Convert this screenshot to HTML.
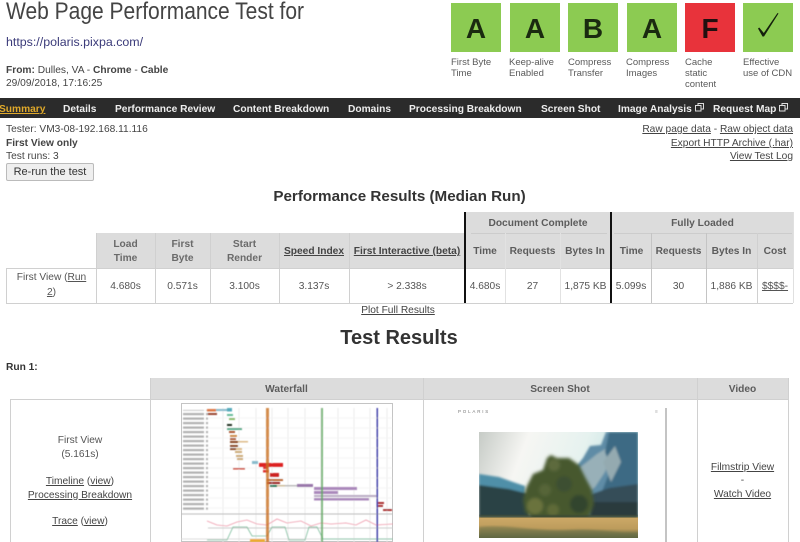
<!DOCTYPE html>
<html><head><meta charset="utf-8"><title>Web Page Performance Test</title>
<style>
html,body{margin:0;padding:0;background:#fff;width:800px;height:542px;overflow:hidden}
#p{position:relative;width:800px;height:542px;overflow:hidden;font-family:"Liberation Sans",sans-serif;font-size:10.2px;color:#444;filter:blur(.35px)}
#p div{position:absolute;white-space:nowrap}
.t{line-height:13px}
.c{text-align:center}
.r{text-align:right}
.b{font-weight:bold}
u{text-decoration:underline}
.g{background:#8ccb52;width:50px;height:49px;top:3px;text-align:center;font:bold 28px/51px "Liberation Sans",sans-serif;color:#1a2a10}
.l{top:57px;line-height:11px;font-size:9.5px;color:#5a5a5a;white-space:pre!important}
.n{top:103px;line-height:13px;font-weight:bold;color:#eee;font-size:10.2px}
.h{background:#dcdcdc}
.vl{width:1px;background:#d0d0d0}
.hl{height:1px;background:#d0d0d0}
.bk{width:2px;background:#111;top:212px;height:91px}
.th{font-weight:bold;color:#5c5c5c;line-height:13.5px;text-align:center}
.td{line-height:13px;text-align:center;top:280px;color:#555}
</style></head><body><div id="p">

<div style="left:6px;top:-3px;font-size:24px;line-height:30px;color:#444;transform:scaleX(.875);transform-origin:0 0">Web Page Performance Test for</div>
<div style="left:6px;top:35px;font-size:12.4px;line-height:15px;color:#3b3b7a">https://polaris.pixpa.com/</div>
<div class="t" style="left:6px;top:64px"><b>From:</b> Dulles, VA - <b>Chrome</b> - <b>Cable</b></div>
<div class="t" style="left:6px;top:77px">29/09/2018, 17:16:25</div>

<div class="g" style="left:451px">A</div>
<div class="g" style="left:510px">A</div>
<div class="g" style="left:568px">B</div>
<div class="g" style="left:627px">A</div>
<div class="g" style="left:685px;background:#e8333b;color:#201010">F</div>
<div class="g" style="left:743px"></div>
<svg style="position:absolute;left:743px;top:3px" width="50" height="49"><path d="M15 25.500 L16.200 24.500 L20.800 30 L34.500 10 L35.500 10.500 L21 33.500 L19.500 33.500Z" fill="#14200c"/></svg>
<div class="l" style="left:451px">First Byte
Time</div>
<div class="l" style="left:509px">Keep-alive
Enabled</div>
<div class="l" style="left:568px">Compress
Transfer</div>
<div class="l" style="left:626px">Compress
Images</div>
<div class="l" style="left:685px">Cache
static
content</div>
<div class="l" style="left:743px">Effective
use of CDN</div>

<div style="left:0;top:98px;width:800px;height:20px;background:#2b2b2b"></div>
<div class="n" style="left:-1px;color:#e0a92a"><u>Summary</u></div>
<div class="n" style="left:63px">Details</div>
<div class="n" style="left:115px">Performance Review</div>
<div class="n" style="left:233px">Content Breakdown</div>
<div class="n" style="left:348px">Domains</div>
<div class="n" style="left:409px">Processing Breakdown</div>
<div class="n" style="left:541px">Screen Shot</div>
<div class="n" style="left:618px">Image Analysis</div>
<div class="n" style="left:713px">Request Map</div>
<svg style="position:absolute;left:695px;top:103px" width="10" height="10"><path d="M.5 2.500h5.500v5.500h-5.500zM3 2.500v-2h5.500v5.500h-2.500" fill="none" stroke="#ddd"/></svg>
<svg style="position:absolute;left:779px;top:103px" width="10" height="10"><path d="M.5 2.500h5.500v5.500h-5.500zM3 2.500v-2h5.500v5.500h-2.500" fill="none" stroke="#ddd"/></svg>

<div class="t" style="left:6px;top:123px">Tester: VM3-08-192.168.11.116</div>
<div class="t b" style="left:6px;top:137px">First View only</div>
<div class="t" style="left:6px;top:150px">Test runs: 3</div>
<div class="c" style="left:6px;top:163px;width:86px;height:16px;border:1px solid #bbb;background:#efefef;border-radius:2px;font-size:11px;line-height:17px;color:#333">Re-run the test</div>

<div class="t r" style="right:7px;top:123px"><u>Raw page data</u> - <u>Raw object data</u></div>
<div class="t r" style="right:7px;top:137px"><u>Export HTTP Archive (.har)</u></div>
<div class="t r" style="right:7px;top:150px"><u>View Test Log</u></div>

<div class="c b" style="left:0;width:799px;top:188px;font-size:15.2px;line-height:18px;color:#333">Performance Results (Median Run)</div>

<div class="h" style="left:96px;top:233px;width:369px;height:35px"></div>
<div class="h" style="left:465px;top:212px;width:328px;height:56px"></div>
<div class="hl" style="left:7px;top:268px;width:786px"></div>
<div class="hl" style="left:7px;top:303px;width:786px"></div>
<div class="hl" style="left:471px;top:233px;width:136px;background:#ccc"></div>
<div class="hl" style="left:614px;top:233px;width:178px;background:#ccc"></div>
<div class="vl" style="left:6px;top:268px;height:36px"></div>
<div class="vl" style="left:96px;top:233px;height:70px"></div>
<div class="vl" style="left:155px;top:233px;height:70px"></div>
<div class="vl" style="left:210px;top:233px;height:70px"></div>
<div class="vl" style="left:279px;top:233px;height:70px"></div>
<div class="vl" style="left:349px;top:233px;height:70px"></div>
<div class="vl" style="left:505px;top:233px;height:70px;background:#e2e2e2"></div>
<div class="vl" style="left:560px;top:233px;height:70px;background:#e2e2e2"></div>
<div class="vl" style="left:651px;top:233px;height:70px;background:#c4c4c4"></div>
<div class="vl" style="left:706px;top:233px;height:70px;background:#c4c4c4"></div>
<div class="vl" style="left:757px;top:233px;height:70px"></div>
<div class="vl" style="left:793px;top:212px;height:91px;background:#e0e0e0"></div>
<div class="bk" style="left:464px"></div>
<div class="bk" style="left:610px"></div>

<div class="th" style="left:466px;width:144px;top:217px;">Document Complete</div>
<div class="th" style="left:612px;width:181px;top:217px;">Fully Loaded</div>
<div class="th" style="left:96px;width:59px;top:238px;color:#6a6a6a">Load<br>Time</div>
<div class="th" style="left:155px;width:55px;top:238px;color:#6a6a6a">First<br>Byte</div>
<div class="th" style="left:210px;width:69px;top:238px;color:#6a6a6a">Start<br>Render</div>
<div class="th" style="left:279px;width:70px;top:245px;color:#444"><u>Speed Index</u></div>
<div class="th" style="left:349px;width:116px;top:245px;color:#444"><u>First Interactive (beta)</u></div>
<div class="th" style="left:465px;width:40px;top:245px">Time</div>
<div class="th" style="left:505px;width:55px;top:245px">Requests</div>
<div class="th" style="left:560px;width:50px;top:245px">Bytes In</div>
<div class="th" style="left:612px;width:39px;top:245px">Time</div>
<div class="th" style="left:651px;width:55px;top:245px">Requests</div>
<div class="th" style="left:706px;width:51px;top:245px">Bytes In</div>
<div class="th" style="left:757px;width:36px;top:245px">Cost</div>

<div class="td" style="left:7px;width:89px;top:271px;line-height:14.500px">First View (<u>Run</u><br><u>2</u>)</div>
<div class="td" style="left:96px;width:59px">4.680s</div>
<div class="td" style="left:155px;width:55px">0.571s</div>
<div class="td" style="left:210px;width:69px">3.100s</div>
<div class="td" style="left:279px;width:70px">3.137s</div>
<div class="td" style="left:349px;width:116px">&gt; 2.338s</div>
<div class="td" style="left:465px;width:40px">4.680s</div>
<div class="td" style="left:505px;width:55px">27</div>
<div class="td" style="left:560px;width:51px">1,875 KB</div>
<div class="td" style="left:611px;width:40px">5.099s</div>
<div class="td" style="left:651px;width:55px">30</div>
<div class="td" style="left:706px;width:51px">1,886 KB</div>
<div class="td" style="left:757px;width:36px"><u>$$$$-</u></div>

<div class="t c" style="left:0;width:796px;top:304px"><u>Plot Full Results</u></div>
<div class="c b" style="left:0;width:798px;top:326px;font-size:20px;line-height:24px;color:#333">Test Results</div>
<div class="t b" style="left:6px;top:361px;color:#333">Run 1:</div>

<div class="h" style="left:150px;top:378px;width:638px;height:22px"></div>
<div class="hl" style="left:10px;top:399px;width:779px"></div>
<div class="vl" style="left:10px;top:399px;height:143px"></div>
<div class="vl" style="left:150px;top:378px;height:164px"></div>
<div class="vl" style="left:423px;top:378px;height:164px"></div>
<div class="vl" style="left:697px;top:378px;height:164px"></div>
<div class="vl" style="left:788px;top:378px;height:164px"></div>
<div class="th" style="left:150px;width:273px;top:383px">Waterfall</div>
<div class="th" style="left:423px;width:274px;top:383px">Screen Shot</div>
<div class="th" style="left:697px;width:91px;top:383px">Video</div>

<div class="t c" style="left:10px;width:140px;top:434px;line-height:13.500px;color:#555">First View<br>(5.161s)</div>
<div class="t c" style="left:10px;width:140px;top:475px;line-height:13.500px"><u>Timeline</u> (<u>view</u>)<br><u>Processing Breakdown</u></div>
<div class="t c" style="left:10px;width:140px;top:515px"><u>Trace</u> (<u>view</u>)</div>
<div class="t c" style="left:697px;width:91px;top:461px"><u>Filmstrip View</u></div>
<div class="t c" style="left:697px;width:91px;top:474px">-</div>
<div class="t c" style="left:697px;width:91px;top:488px"><u>Watch Video</u></div>

<!-- waterfall -->
<svg style="position:absolute;left:181px;top:403px" width="212" height="139" viewBox="0 0 212 139">
<defs><filter id="s"><feGaussianBlur stdDeviation=".6"/></filter>
<pattern id="tx" width="25" height="4.500" patternUnits="userSpaceOnUse"><rect y="1" width="23" height="2.200" fill="#888" opacity=".65"/></pattern></defs>
<rect x=".5" y=".5" width="211" height="138" fill="#fff" stroke="#c4c4c4"/>
<g filter="url(#s)">
<rect x="2" y="7" width="25" height="102" fill="url(#tx)"/>
<g stroke="#ebebeb"><path d="M42 5V139M58 5V139M75 5V139M91 5V139M107 5V139M124 5V139M140 5V139M157 5V139M173 5V139M189 5V139M206 5V139"/></g>
<g stroke="#f4f4f4"><path d="M27 15H211M27 25H211M27 35H211M27 45H211M27 55H211M27 65H211M27 75H211M27 85H211M27 95H211M27 105H211"/></g>
<rect x="26" y="6" width="9" height="2.500" fill="#d74"/><rect x="35" y="6" width="11" height="2" fill="#8bc"/><rect x="46" y="5" width="5" height="3.500" fill="#5ab"/>
<rect x="27" y="10" width="9" height="2" fill="#943"/>
<rect x="46" y="11" width="6" height="2" fill="#6b9"/><rect x="48" y="15" width="6" height="2" fill="#8b6"/>
<rect x="46" y="21" width="5" height="2" fill="#232"/><rect x="46" y="25" width="15" height="2" fill="#5a8"/>
<rect x="48" y="28" width="6" height="2" fill="#a53"/><rect x="49" y="32" width="7" height="2" fill="#c84"/><rect x="49" y="35" width="6" height="2" fill="#a53"/>
<rect x="49" y="38" width="8" height="2" fill="#842"/><rect x="57" y="38" width="10" height="1.500" fill="#db8"/>
<rect x="49" y="42" width="8" height="2" fill="#842"/><rect x="49" y="45" width="6" height="2" fill="#842"/><rect x="55" y="45" width="6" height="2" fill="#db8"/>
<rect x="54" y="48" width="7" height="2" fill="#ca7"/><rect x="55" y="52" width="7" height="2" fill="#ca7"/><rect x="56" y="55" width="6" height="2" fill="#ca7"/>
<rect x="71" y="58" width="6" height="3" fill="#8bc"/>
<rect x="78" y="60" width="24" height="4" fill="#d22"/><rect x="52" y="65" width="12" height="1.500" fill="#c43"/>
<rect x="82" y="63" width="5" height="3" fill="#d33"/><rect x="82" y="67" width="6" height="2.500" fill="#d33"/>
<rect x="89" y="70" width="9" height="4" fill="#c22"/><rect x="86" y="76" width="16" height="2" fill="#b63"/><rect x="86" y="79" width="13" height="2" fill="#922"/>
<rect x="89" y="82" width="7" height="2" fill="#275"/><rect x="96" y="82" width="8" height="1.500" fill="#cb9"/><rect x="104" y="82" width="12" height="1.500" fill="#bbb"/><rect x="116" y="81" width="16" height="3" fill="#97a"/>
<rect x="133" y="84" width="43" height="3" fill="#a8b"/>
<rect x="133" y="88" width="24" height="3" fill="#a8b"/>
<rect x="133" y="92" width="63" height="2" fill="#b9acc4"/>
<rect x="133" y="95" width="55" height="2.500" fill="#a8b"/>
<rect x="197" y="99" width="6" height="2" fill="#a33"/><rect x="197" y="102" width="5" height="2" fill="#a33"/><rect x="202" y="106" width="9" height="2" fill="#a33"/>
<path d="M0 111H212" stroke="#bbb"/><path d="M27 125H212" stroke="#ccc"/><path d="M0 136H212" stroke="#ddd"/>
<path d="M26 118L36 122 46 123 56 119 66 117 76 121 86 122 96 116 106 120 120 118 130 123 140 120 150 121 165 120 175 122 185 117 195 122 212 121" fill="none" stroke="#e9a" stroke-width=".8"/>
<path d="M26 137H46L52 124H66L71 133H86L91 124H104L108 137H124L128 124H136L142 136H212" fill="none" stroke="#7b9" stroke-width=".8"/>
<rect x="69" y="136" width="15" height="3" fill="#ea3"/>
<rect x="85" y="5" width="3" height="134" fill="#c96f20" opacity=".8"/>
<rect x="140" y="5" width="2" height="134" fill="#5ea85e" opacity=".8"/>
<rect x="195.500" y="5" width="1.500" height="134" fill="#4444aa"/>
</g>
</svg>

<!-- screenshot -->
<div class="vl" style="left:665px;top:408px;height:134px;width:1.500px;background:#c4c4c4"></div>
<div style="left:458px;top:409px;font-size:4.500px;letter-spacing:1.800px;line-height:6px;color:#777">POLARIS</div>
<div style="left:655px;top:409px;font-size:5px;line-height:6px;color:#aaa">≡</div>
<svg style="position:absolute;left:479px;top:432px" width="159" height="106" viewBox="0 0 159 106">
<defs>
<linearGradient id="sky" x1="0" x2="1" y1="0" y2=".25"><stop offset="0" stop-color="#c6cbc6"/><stop offset=".3" stop-color="#f6f6f3"/><stop offset=".65" stop-color="#e6f2ef"/><stop offset="1" stop-color="#b8dcde"/></linearGradient>
<linearGradient id="fld" x1="0" x2="0" y1="0" y2="1"><stop offset="0" stop-color="#cda968"/><stop offset=".55" stop-color="#bd9c5c"/><stop offset="1" stop-color="#5f6440"/></linearGradient>
<filter id="b1"><feGaussianBlur stdDeviation="1"/></filter>
<filter id="b2"><feGaussianBlur stdDeviation="1.600"/></filter>
</defs>
<rect width="159" height="106" fill="url(#sky)"/>
<g filter="url(#b1)">
<path d="M0 42L20 45 34 50 46 54 46 70H0Z" fill="#4f8fa8"/>
<path d="M0 53L30 57 50 62 50 85H0Z" fill="#2c4244"/>
<path d="M96 36L104 26 111 14 122 13 127 0H159V85H96Z" fill="#5f8ca6"/>
<path d="M100 36L108 30 118 22 128 16 134 10 126 40 116 55 110 60Z" fill="#98b0b8"/>
<path d="M130 0H159V58L140 66 122 62 132 36 126 20Z" fill="#3d6a84"/>
<path d="M124 30L136 14 142 30 132 50Z" fill="#94aab0"/>
<path d="M110 63L130 56 159 52V85H110Z" fill="#344e58"/>
<path d="M112 70H159V85H112Z" fill="#2a3a3c"/>
</g>
<g filter="url(#b2)">
<path d="M44 68L47 56 54 42 64 38 68 26 72 23 78 26 90 26 100 33 106 45 113 58 115 72 110 86 82 88 54 88 46 80Z" fill="#47582f"/>
<circle cx="56" cy="74" r="8" fill="#6b733e"/><circle cx="75" cy="33" r="6" fill="#5d6a3c"/><circle cx="85" cy="52" r="8" fill="#3e5030"/><circle cx="66" cy="58" r="6" fill="#566538"/><circle cx="100" cy="72" r="9" fill="#33452f"/><circle cx="74" cy="78" r="6" fill="#5f6a38"/>
</g>
<rect y="85" width="159" height="21" fill="url(#fld)"/>
<rect y="83" width="159" height="2.500" fill="#3c4a35" filter="url(#b1)"/>
<path d="M0 95C30 92 60 100 90 98 120 96 140 102 159 100V106H0Z" fill="#5e6b45" opacity=".55" filter="url(#b1)"/>
</svg>

</div></body></html>
